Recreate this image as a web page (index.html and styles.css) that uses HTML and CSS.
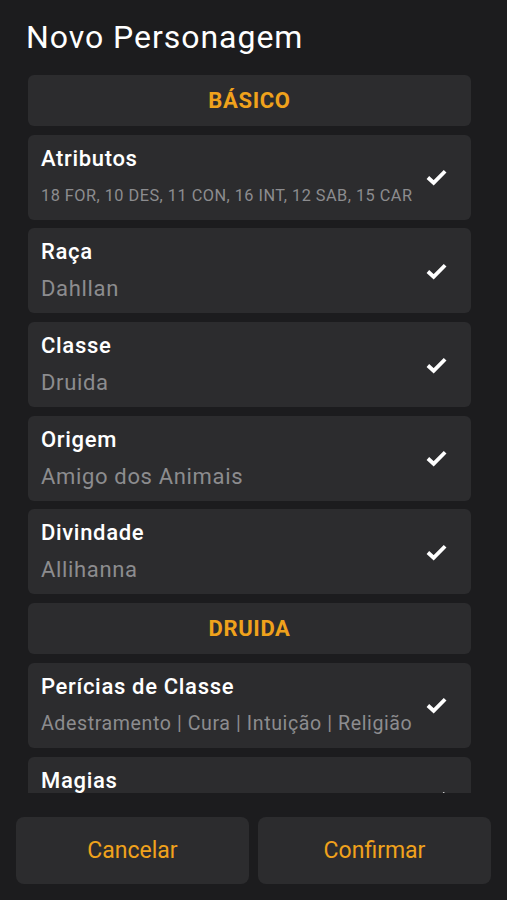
FILE: index.html
```html
<!DOCTYPE html>
<html lang="pt-BR">
<head>
    <meta charset="UTF-8">
    <meta name="viewport" content="width=device-width, initial-scale=1.0">
    <title>Novo Personagem</title>
    <link rel="stylesheet" href="styles.css">
</head>
<body>
    <div class="screen">
        <h1 class="title">Novo Personagem</h1>

        <div class="list">
            <div class="section">BÁSICO</div>

            <div class="item">
                <div class="item-text">
                    <div class="item-title">Atributos</div>
                    <div class="item-value small">18 FOR, 10 DES, 11 CON, 16 INT, 12 SAB, 15 CAR</div>
                </div>
                <svg class="check" viewBox="0 0 24 18"><polyline points="3,9.5 9,15 21,3"/></svg>
            </div>

            <div class="item">
                <div class="item-text">
                    <div class="item-title">Raça</div>
                    <div class="item-value">Dahllan</div>
                </div>
                <svg class="check" viewBox="0 0 24 18"><polyline points="3,9.5 9,15 21,3"/></svg>
            </div>

            <div class="item">
                <div class="item-text">
                    <div class="item-title">Classe</div>
                    <div class="item-value">Druida</div>
                </div>
                <svg class="check" viewBox="0 0 24 18"><polyline points="3,9.5 9,15 21,3"/></svg>
            </div>

            <div class="item">
                <div class="item-text">
                    <div class="item-title">Origem</div>
                    <div class="item-value">Amigo dos Animais</div>
                </div>
                <svg class="check" viewBox="0 0 24 18"><polyline points="3,9.5 9,15 21,3"/></svg>
            </div>

            <div class="item">
                <div class="item-text">
                    <div class="item-title">Divindade</div>
                    <div class="item-value">Allihanna</div>
                </div>
                <svg class="check" viewBox="0 0 24 18"><polyline points="3,9.5 9,15 21,3"/></svg>
            </div>

            <div class="section">DRUIDA</div>

            <div class="item">
                <div class="item-text">
                    <div class="item-title">Perícias de Classe</div>
                    <div class="item-value long">Adestramento | Cura | Intuição | Religião</div>
                </div>
                <svg class="check" viewBox="0 0 24 18"><polyline points="3,9.5 9,15 21,3"/></svg>
            </div>

            <!-- último item fica cortado pela área de rolagem -->
            <div class="item item-cut">
                <div class="item-text">
                    <div class="item-title">Magias</div>
                </div>
                <svg class="check" viewBox="0 0 24 18"><polyline points="3,9.5 9,15 21,3"/></svg>
            </div>
        </div>

        <div class="actions">
            <button class="btn">Cancelar</button>
            <button class="btn">Confirmar</button>
        </div>
    </div>
</body>
</html>
```
FILE: styles.css
```css
body {
    margin: 0;
    background-color: #1c1c1e;
    font-family: Roboto, 'Noto Sans', sans-serif;
    color: #ffffff;
}

.screen {
    display: flex;
    flex-direction: column;
    height: 900px;
}

.title {
    margin: 0;
    padding: 18px 26px 0 26px;
    height: 75px;
    box-sizing: border-box;
    font-size: 32px;
    font-weight: 400;
    line-height: 38px;
    letter-spacing: 0.03em;
    flex-shrink: 0;
}

.list {
    flex: 1;
    overflow: hidden;
    padding: 0 36px 0 28px;
    display: flex;
    flex-direction: column;
    gap: 8.7px;
}

.section {
    flex-shrink: 0;
    height: 51px;
    background-color: #2c2c2e;
    border-radius: 6px;
    display: flex;
    align-items: center;
    justify-content: center;
    color: #f0a21c;
    font-size: 22px;
    font-weight: 700;
    letter-spacing: 0.03em;
}

.item {
    flex-shrink: 0;
    height: 85px;
    box-sizing: border-box;
    background-color: #2c2c2e;
    border-radius: 6px;
    padding: 0 23px 0 13px;
    display: flex;
    align-items: center;
}

.item-text {
    flex: 1;
    min-width: 0;
}

.item-title {
    font-family: 'Roboto Medium', Roboto, 'Noto Sans', sans-serif;
    font-size: 22px;
    font-weight: 500;
    line-height: 28px;
    letter-spacing: 0.03em;
}

.item-value {
    margin-top: 9px;
    font-size: 22px;
    line-height: 28px;
    color: #8c8c8f;
    white-space: nowrap;
    letter-spacing: 0.03em;
}

.item-value.small {
    font-size: 16.3px;
}

.item-value.long {
    font-size: 19.6px;
}

.item-cut {
    align-items: flex-start;
    padding-top: 10px;
}

.item-cut .check {
    margin-top: 23px;
}

.check {
    width: 23px;
    height: 18px;
    flex-shrink: 0;
}

.check polyline {
    fill: none;
    stroke: #ffffff;
    stroke-width: 4;
    stroke-linejoin: miter;
}

.actions {
    display: flex;
    gap: 9px;
    padding: 24px 16px 16px 16px;
    flex-shrink: 0;
}

.btn {
    flex: 1;
    height: 67px;
    background-color: #2c2c2e;
    border: none;
    border-radius: 8px;
    color: #f0a21c;
    font-family: Roboto, 'Noto Sans', sans-serif;
    font-size: 23px;
}
```
